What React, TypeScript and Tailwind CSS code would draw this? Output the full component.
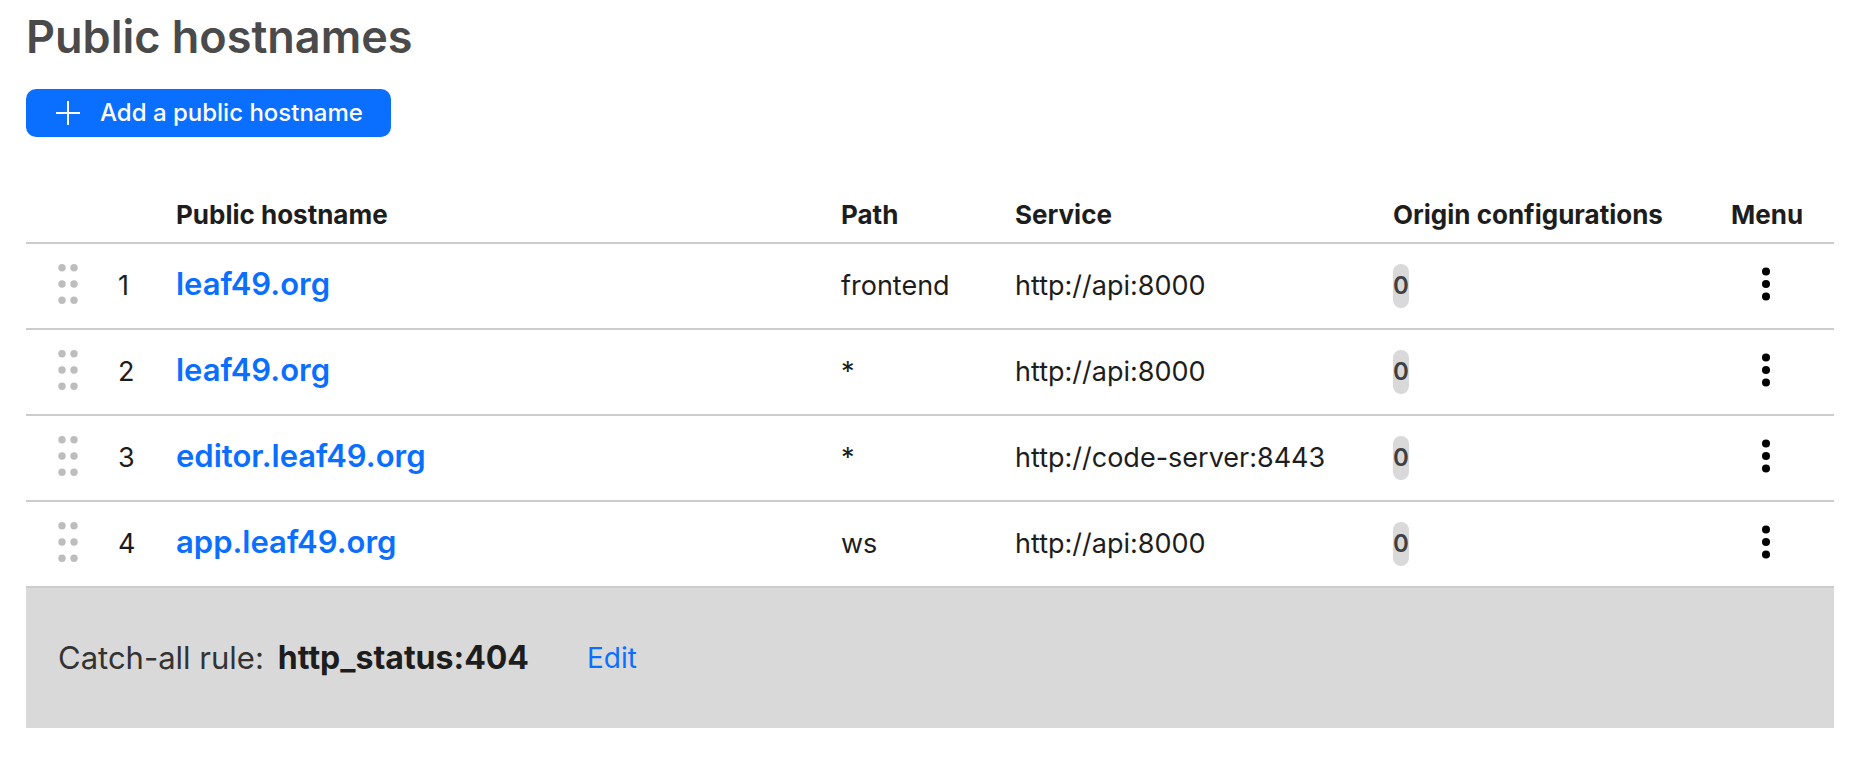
type Rule = { host: string; path: string; service: string; configs: number };

const rules: Rule[] = [
  { host: "leaf49.org", path: "frontend", service: "http://api:8000", configs: 0 },
  { host: "leaf49.org", path: "*", service: "http://api:8000", configs: 0 },
  { host: "editor.leaf49.org", path: "*", service: "http://code-server:8443", configs: 0 },
  { host: "app.leaf49.org", path: "ws", service: "http://api:8000", configs: 0 },
];

function PlusIcon() {
  return (
    <svg className="size-6" viewBox="0 0 24 24" fill="none" stroke="currentColor" strokeWidth="2" aria-hidden="true">
      <path d="M12 0v24M0 12h24" />
    </svg>
  );
}

function GripIcon() {
  return (
    <svg className="h-10 w-5" viewBox="0 0 20 40" fill="#bdbdbd" aria-hidden="true">
      {[3.7, 20, 36.3].map((y) => (
        <g key={y}>
          <circle cx="4" cy={y} r="3.7" />
          <circle cx="16" cy={y} r="3.7" />
        </g>
      ))}
    </svg>
  );
}

function KebabIcon() {
  return (
    <svg className="h-9 w-2" viewBox="0 0 8 36" fill="#000" aria-hidden="true">
      <circle cx="4" cy="5.5" r="4" />
      <circle cx="4" cy="18" r="4" />
      <circle cx="4" cy="30.5" r="4" />
    </svg>
  );
}

export default function App() {
  return (
    <main className="bg-white pt-2 pr-8 pl-[26px] font-['Inter','Liberation_Sans',sans-serif] text-[#1d1d1d]">
      <h1 className="text-[45px] leading-[58px] font-semibold text-[#4a4a4a]">Public hostnames</h1>
      <button
        type="button"
        className="mt-[23px] flex h-12 items-center gap-5 rounded-[10px] bg-[#0a6fff] pr-7 pl-[30px] text-[24px] font-medium text-white"
      >
        <PlusIcon />
        Add a public hostname
      </button>

      <table className="mt-12 w-full table-fixed border-collapse text-left text-[27px]">
        <colgroup>
          <col className="w-[92px]" />
          <col className="w-[58px]" />
          <col />
          <col className="w-[174px]" />
          <col className="w-[378px]" />
          <col className="w-[338px]" />
          <col className="w-[103px]" />
        </colgroup>
        <thead>
          <tr className="h-[58px] border-b-2 border-[#cccccc] text-[26px] whitespace-nowrap *:pt-[2px] *:font-bold">
            <td />
            <td />
            <th scope="col">Public hostname</th>
            <th scope="col">Path</th>
            <th scope="col">Service</th>
            <th scope="col">Origin configurations</th>
            <th scope="col">Menu</th>
          </tr>
        </thead>
        <tbody>
          {rules.map((rule, i) => (
            <tr key={i} className="h-[86px] border-b-2 border-[#cccccc] whitespace-nowrap">
              <td>
                <button type="button" aria-label="Reorder" className="flex pb-1 pl-8">
                  <GripIcon />
                </button>
              </td>
              <td>{i + 1}</td>
              <td className="pb-1">
                <a href="#" className="text-[31px] font-semibold text-[#0a6fff]">{rule.host}</a>
              </td>
              <td>{rule.path}</td>
              <td>{rule.service}</td>
              <td>
                <span className="flex h-11 w-4 items-center justify-center rounded-full bg-[#d9d9d9] text-[24px] font-semibold text-[#404040]">
                  {rule.configs}
                </span>
              </td>
              <td>
                <button type="button" aria-label="Menu" className="flex pb-1 pl-[31px]">
                  <KebabIcon />
                </button>
              </td>
            </tr>
          ))}
        </tbody>
      </table>

      <div className="flex h-[140px] items-center bg-[#d9d9d9] px-8 text-[31px]">
        <span className="text-[#333333]">Catch-all rule:</span>
        <span className="ml-[14px] text-[32px] font-bold">http_status:404</span>
        <a href="#" className="ml-[58px] text-[28px] text-[#0a6fff]">Edit</a>
      </div>
    </main>
  );
}
